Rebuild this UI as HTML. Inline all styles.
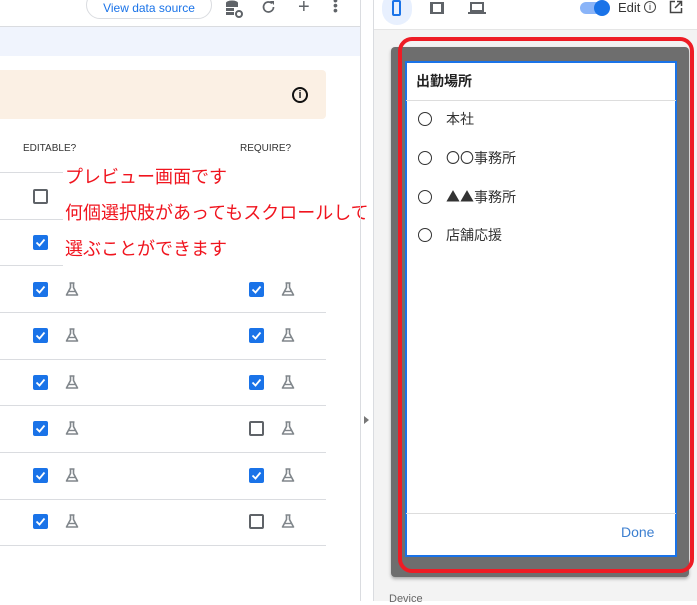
<!DOCTYPE html>
<html><head><meta charset="utf-8"><style>
*{box-sizing:border-box;margin:0;padding:0}
body{width:697px;height:601px;overflow:hidden;position:relative;background:#fff;font-family:"Liberation Sans","Noto Sans CJK JP",sans-serif;color:#202124}
.a{position:absolute}
.cb{position:absolute;width:15px;height:15px;border-radius:2px;background:#1a73e8}
.cb svg{position:absolute;left:1px;top:1px}
.cu{position:absolute;width:15px;height:15px;border-radius:2px;border:2px solid #5f6368;background:#fff}
.line{position:absolute;left:0;width:326px;height:1px;background:#dadce0}
.radio{position:absolute;left:418px;width:14px;height:14px;border:1.5px solid #333;border-radius:50%}
.item{position:absolute;left:446px;font-size:14px;line-height:16px;color:#333;font-family:"Noto Sans CJK JP",sans-serif}
</style></head><body>
<div class="a" style="left:0;top:26px;width:360px;height:1px;background:#dadce0"></div>
<div class="a" style="left:0;top:27px;width:360px;height:29px;background:#f0f4fd"></div>
<div class="a" style="left:86px;top:-9px;width:126px;height:28px;border:1px solid #dadce0;border-radius:14px;color:#1a73e8;font-size:12px;text-align:center;line-height:32px">View data source</div>
<svg class="a" style="left:224px;top:0" width="20" height="20" viewBox="0 0 20 20"><ellipse cx="8" cy="3" rx="6" ry="2.5" fill="#5f6368"/><rect x="2" y="3" width="12" height="4" fill="#5f6368"/><rect x="2" y="8" width="8" height="3" fill="#5f6368"/><rect x="2" y="12" width="8" height="3" fill="#5f6368"/><circle cx="15" cy="14" r="3" fill="none" stroke="#5f6368" stroke-width="2"/></svg>
<svg class="a" style="left:261px;top:-1px" width="16" height="16" viewBox="0 0 16 16"><path d="M12.5 8a5 5 0 1 1-1.5-3.6" fill="none" stroke="#5f6368" stroke-width="1.7"/><path d="M9 2h4v4z" fill="#5f6368"/></svg>
<div class="a" style="left:298px;top:-4px;font-size:20px;color:#5f6368">+</div>
<div class="a" style="left:333px;top:-2px;width:4px;line-height:5px;font-size:14px;color:#5f6368">•<br>•<br>•</div>
<div class="a" style="left:0;top:70px;width:326px;height:49px;background:#fbf0e4;border-radius:0 4px 4px 0"></div>
<div class="a" style="left:292px;top:87px;width:16px;height:16px;border:2px solid #111;border-radius:50%;font-size:11px;font-weight:bold;text-align:center;line-height:12px">i</div>
<div class="a" style="left:23px;top:143px;font-size:10px;color:#333">EDITABLE?</div>
<div class="a" style="left:240px;top:143px;font-size:10px;color:#333">REQUIRE?</div>
<div class="line" style="top:172px"></div><div class="line" style="top:219px"></div><div class="line" style="top:265px"></div><div class="line" style="top:312px"></div><div class="line" style="top:359px"></div><div class="line" style="top:405px"></div><div class="line" style="top:452px"></div><div class="line" style="top:499px"></div><div class="line" style="top:545px"></div>
<div class="cu" style="left:33px;top:189px"></div>
<div id="rows"></div>
<script>
var ys=[235,282,328,375,421,468,514],req=[null,1,1,1,0,1,0];
var chk='<svg width="13" height="13" viewBox="0 0 13 13"><path d="M2.5 6.5l3 3 5-6" fill="none" stroke="#fff" stroke-width="1.8"/></svg>';
var fl='<svg width="16" height="16" viewBox="0 0 16 16"><path d="M5.5 2h5M6.5 2v4.5L2.5 14h11L9.5 6.5V2" fill="none" stroke="#80868b" stroke-width="1.6" stroke-linejoin="round"/><path d="M4.5 10.5h7" stroke="#80868b" stroke-width="1.4"/></svg>';
var h='';ys.forEach(function(y,i){h+='<div class="cb" style="left:33px;top:'+y+'px">'+chk+'</div>';
if(i>0){h+='<div class="a" style="left:64px;top:'+(y-1)+'px">'+fl+'</div><div class="a" style="left:280px;top:'+(y-1)+'px">'+fl+'</div>';
h+=req[i]?'<div class="cb" style="left:249px;top:'+y+'px">'+chk+'</div>':'<div class="cu" style="left:249px;top:'+y+'px"></div>';}});
document.getElementById('rows').innerHTML=h;
</script>
<div class="a" style="left:63px;top:159px;width:319px;height:110px;background:#fff;color:#f0141e;font-size:18px;line-height:36px;padding:0 0 0 2px;white-space:nowrap">プレビュー画面です<br>何個選択肢があってもスクロールして<br>選ぶことができます</div>
<div class="a" style="left:360px;top:0;width:1px;height:601px;background:#dadce0"></div>
<div class="a" style="left:373px;top:0;width:1px;height:601px;background:#dadce0"></div>
<div class="a" style="left:364px;top:416px;width:0;height:0;border-left:5px solid #777;border-top:4px solid transparent;border-bottom:4px solid transparent"></div>
<div class="a" style="left:374px;top:0;width:323px;height:601px;background:#f3f3f3"></div>
<div class="a" style="left:374px;top:0;width:323px;height:30px;background:#fff;border-bottom:1px solid #e5e5e5"></div>
<div class="a" style="left:382px;top:-8px;width:30px;height:33px;background:#e8f0fe;border-radius:15px"></div>
<div class="a" style="left:392px;top:0;width:9px;height:16px;border:2px solid #1a73e8;border-radius:2px"></div>
<div class="a" style="left:430px;top:2px;width:14px;height:12px;border:2px solid #5f6368;border-left-width:3px;border-right-width:3px"></div>
<div class="a" style="left:470px;top:2px;width:14px;height:10px;border:2px solid #5f6368"></div>
<div class="a" style="left:468px;top:12px;width:18px;height:2px;background:#5f6368"></div>
<div class="a" style="left:580px;top:2px;width:26px;height:12px;background:#8ab4f8;border-radius:6px"></div>
<div class="a" style="left:594px;top:0;width:16px;height:16px;background:#1a73e8;border-radius:50%"></div>
<div class="a" style="left:618px;top:0;font-size:13px;color:#333">Edit</div>
<div class="a" style="left:644px;top:1px;width:12px;height:12px;border:1.3px solid #444;border-radius:50%;font-size:9px;text-align:center;line-height:10px">i</div>
<svg class="a" style="left:669px;top:0" width="14" height="14" viewBox="0 0 14 14"><path d="M6 1.5H1.5v11h11V8M8 1.5h4.5V6M12.5 1.5L6 8" fill="none" stroke="#444" stroke-width="1.5"/></svg>
<div class="a" style="left:391px;top:47px;width:298px;height:530px;background:#6e6e6e;border-radius:4px;box-shadow:0 2px 3px rgba(0,0,0,.3)"></div>
<div class="a" style="left:398px;top:37px;width:296px;height:536px;border:4px solid #ee1c25;border-radius:14px"></div>
<div class="a" style="left:405px;top:61px;width:272px;height:496px;background:#fff;border:2px solid #1a73e8"></div>
<div class="a" style="left:416px;top:71px;font-size:14px;font-weight:bold;color:#222">出勤場所</div>
<div class="a" style="left:406px;top:100px;width:270px;height:1px;background:#ddd"></div>
<div class="radio" style="top:112px"></div><div class="item" style="top:111px">本社</div>
<div class="radio" style="top:151px"></div><div class="item" style="top:150px">〇〇事務所</div>
<div class="radio" style="top:190px"></div><div class="item" style="top:189px">▲▲事務所</div>
<div class="radio" style="top:228px"></div><div class="item" style="top:227px">店舗応援</div>
<div class="a" style="left:406px;top:513px;width:270px;height:1px;background:#ddd"></div>
<div class="a" style="left:621px;top:524px;font-size:14px;color:#3c7fd0">Done</div>
<div class="a" style="left:389px;top:593px;font-size:11px;color:#666">Device</div>
</body></html>
